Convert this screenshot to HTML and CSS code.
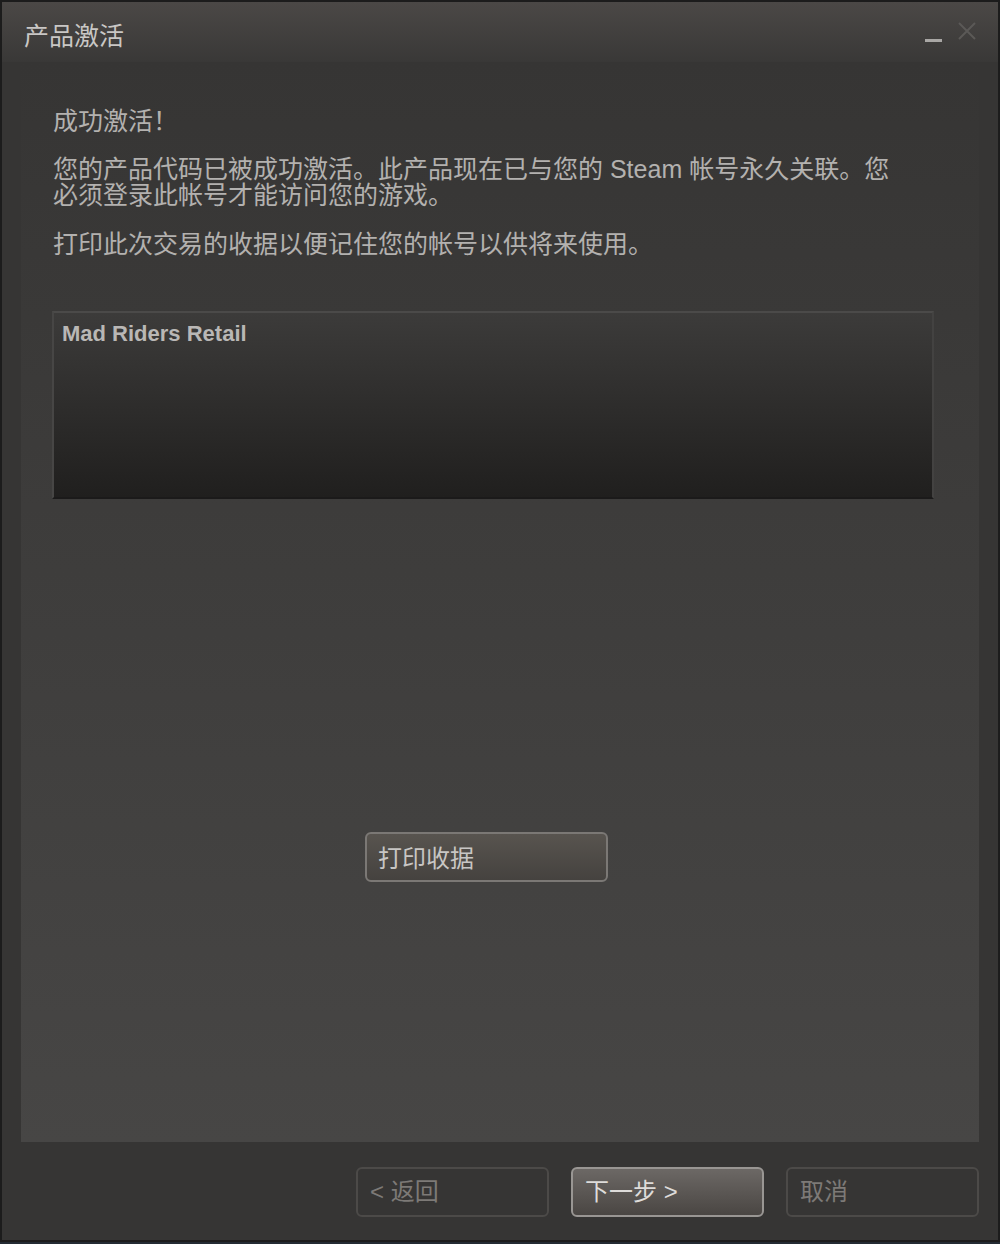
FILE: index.html
```html
<!DOCTYPE html>
<html lang="zh">

<head>
    <meta charset="UTF-8">
    <meta name="viewport" content="width=device-width, initial-scale=1.0">
    <title>产品激活</title>
    <link rel="stylesheet" href="styles.css">
</head>

<body>
    <div class="window">
        <!-- Title bar -->
        <div class="titlebar">
            <span class="title">产品激活</span>
            <div class="win-controls">
                <span class="btn-min"></span>
                <svg class="btn-close" width="20" height="20" viewBox="0 0 20 20">
                    <path d="M2 2 L18 18 M18 2 L2 18" stroke="#5b5957" stroke-width="2" fill="none" />
                </svg>
            </div>
        </div>

        <!-- Main panel -->
        <div class="panel">
            <h2 class="heading">成功激活！</h2>
            <p class="text">您的产品代码已被成功激活。此产品现在已与您的 Steam 帐号永久关联。您必须登录此帐号才能访问您的游戏。</p>
            <p class="text">打印此次交易的收据以便记住您的帐号以供将来使用。</p>

            <div class="product-box">Mad Riders Retail</div>

            <button class="btn-print">打印收据</button>
        </div>

        <!-- Wizard buttons -->
        <div class="footer">
            <button class="btn-wizard disabled">&lt; 返回</button>
            <button class="btn-wizard active">下一步 &gt;</button>
            <button class="btn-wizard disabled">取消</button>
        </div>
    </div>
</body>

</html>
```

FILE: styles.css
```css
* {
    box-sizing: border-box;
}

body {
    margin: 0;
    background: #232a33;
    font-family: "Liberation Sans", "Noto Sans CJK TC", sans-serif;
}

.window {
    width: 1000px;
    height: 1242px;
    display: flex;
    flex-direction: column;
    border: 2px solid #1c1c1c;
    background: #363534;
}

.titlebar {
    height: 60px;
    display: flex;
    justify-content: space-between;
    align-items: flex-start;
    padding: 19px 22px 0 22px;
    background: linear-gradient(#4b4846, #393837);
}

.title {
    font-size: 25px;
    line-height: 30px;
    color: #c9c7c5;
}

.win-controls {
    display: flex;
    align-items: flex-start;
    gap: 15px;
    margin-right: -1px;
}

.btn-min {
    display: block;
    width: 17px;
    height: 3px;
    margin-top: 18px;
    background: #a9a7a5;
}

.btn-close {
    display: block;
}

.panel {
    flex: 1;
    margin: 0 19px;
    padding: 44px 45px 0 32px;
    background: linear-gradient(#363534, #474645);
}

.heading {
    margin: 0;
    font-size: 25px;
    font-weight: normal;
    line-height: 30px;
    color: #b3b1af;
}

.text {
    max-width: 855px;
    margin: 20px 0 0 0;
    font-size: 25px;
    line-height: 26px;
    color: #b3b1af;
}

.text + .text {
    margin-top: 23px;
}

.product-box {
    height: 188px;
    margin: 54px 0 0 -1px;
    padding: 8px 8px;
    border-top: 2px solid #4b4a49;
    border-left: 2px solid #474645;
    border-right: 2px solid #434241;
    border-bottom: 2px solid #1b1a1a;
    background: linear-gradient(#3c3b3a, #201f1e);
    font-size: 22px;
    font-weight: bold;
    color: #b9b7b5;
}

.btn-print {
    display: block;
    width: 243px;
    height: 50px;
    margin: 333px 0 0 312px;
    padding: 0 0 2px 11px;
    text-align: left;
    border: 2px solid #7b7875;
    border-radius: 6px;
    background: linear-gradient(#58544f, #45423f);
    font-family: inherit;
    font-size: 24px;
    color: #c8c6c4;
}

.footer {
    height: 98px;
    display: flex;
    justify-content: flex-end;
    align-items: flex-start;
    gap: 22px;
    padding: 25px 19px 0 0;
}

.btn-wizard {
    width: 193px;
    height: 50px;
    padding: 0 0 5px 12px;
    text-align: left;
    border: 2px solid #4c4a48;
    border-radius: 6px;
    background: transparent;
    font-family: inherit;
    font-size: 24px;
    color: #7d7a77;
}

.btn-wizard.active {
    border-color: #999693;
    background: linear-gradient(#6c6865, #4a4643);
    color: #dedcda;
}
```
